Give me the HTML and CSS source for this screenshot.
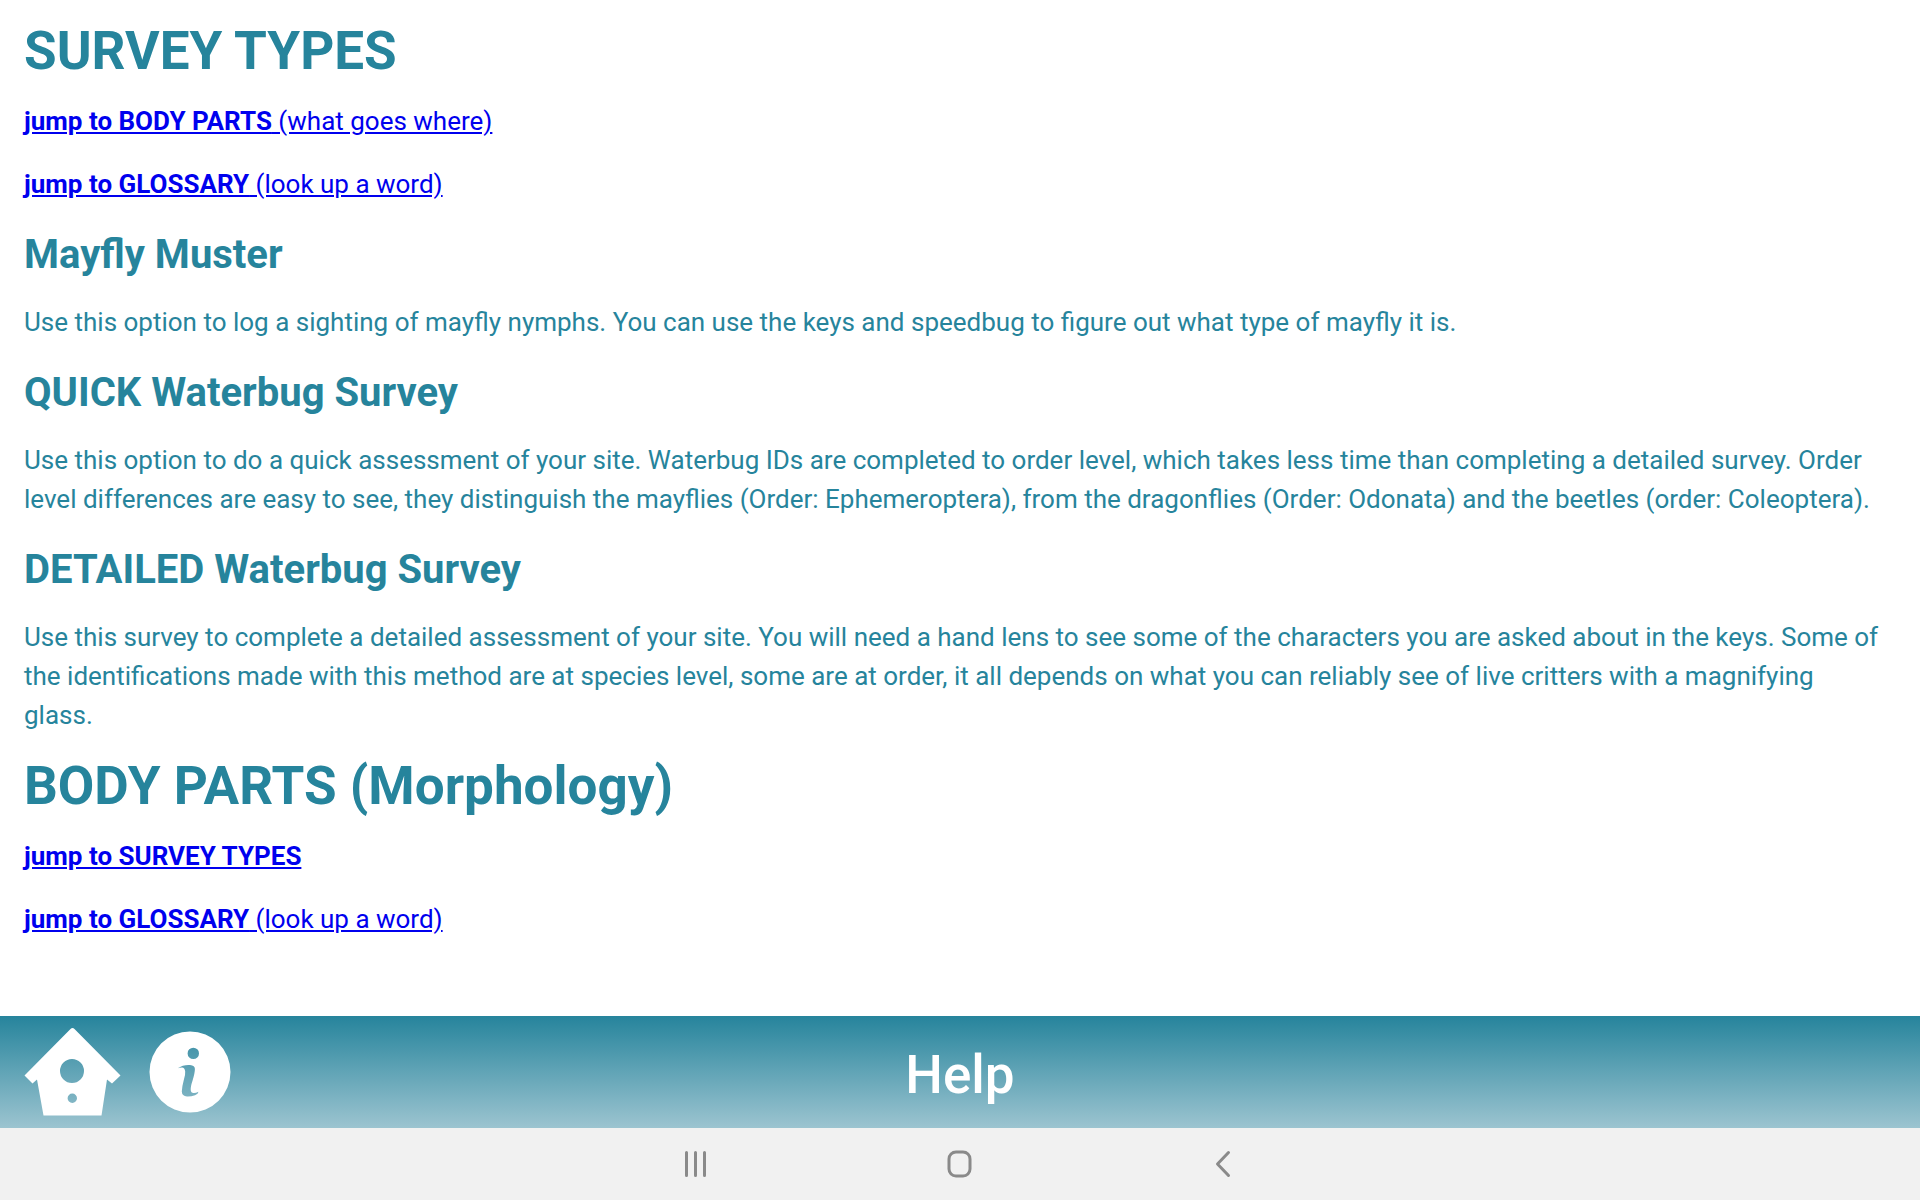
FILE: index.html
```html
<!DOCTYPE html>
<html lang="en">
<head>
<meta charset="utf-8">
<title>Help</title>
<link rel="stylesheet" href="styles.css">
</head>
<body>
<main class="content">
<h1 id="survey">SURVEY TYPES</h1>
<p><a href="#body-parts"><b>jump to BODY PARTS</b> (what goes where)</a></p>
<p><a href="#glossary"><b>jump to GLOSSARY</b> (look up a word)</a></p>
<h2>Mayfly Muster</h2>
<p>Use this option to log a sighting of mayfly nymphs. You can use the keys and speedbug to figure out what type of mayfly it is.</p>
<h2>QUICK Waterbug Survey</h2>
<p>Use this option to do a quick assessment of your site. Waterbug IDs are completed to order level, which takes less time than completing a detailed survey. Order level differences are easy to see, they distinguish the mayflies (Order: Ephemeroptera), from the dragonflies (Order: Odonata) and the beetles (order: Coleoptera).</p>
<h2>DETAILED Waterbug Survey</h2>
<p>Use this survey to complete a detailed assessment of your site. You will need a hand lens to see some of the characters you are asked about in the keys. Some of the identifications made with this method are at species level, some are at order, it all depends on what you can reliably see of live critters with a magnifying glass.</p>
<h1 id="body-parts">BODY PARTS (Morphology)</h1>
<p><a href="#survey"><b>jump to SURVEY TYPES</b></a></p>
<p><a href="#glossary"><b>jump to GLOSSARY</b> (look up a word)</a></p>
</main>
<footer class="toolbar">
<div class="actions">
<button class="icon-button" type="button" aria-label="Home"><svg width="97" height="88" viewBox="0 0 97 88"><path fill="#fff" fill-rule="evenodd" d="M46.500 1Q48.500-1 50.500 1L96.500 47.500 88 55.500 83 51.500 77.500 87.500h-58L13 51.500 8.500 55.500.5 47.500zM48 31a12 12 0 1 0 0 24 12 12 0 0 0 0-24zm.3 34.600a4.700 4.700 0 1 0 0 9.400 4.700 4.700 0 0 0 0-9.400z"/></svg></button>
<button class="icon-button" type="button" aria-label="Information"><svg width="82" height="82" viewBox="0 0 82 82"><path fill="#fff" fill-rule="evenodd" d="M41 .5a40.500 40.500 0 1 0 0 81 40.500 40.500 0 0 0 0-81zM44.300 16.700a5.700 5.700 0 1 1 0 11.400 5.700 5.700 0 0 1 0-11.400zM28.800 37.300C32 34.500 38 33.500 41 34q5 .5 4.900 4 0 4-2.400 11.700-2 6-1.800 9.300.2 3 2.800 3 2 .2 5-1.200-.3 2-3.500 3.500-4 1.500-8 1.300-5-.5-5.200-5 .2-5 2-11.600 1.700-5 1.400-8.500-.5-4-3.200-4-2 0-4.200.8z"/></svg></button>
</div>
<div class="title">Help</div>
</footer>
<nav class="system-bar" aria-label="System">
<button class="nav-button" type="button" aria-label="Recent apps"><svg width="28" height="28" viewBox="0 0 28 28"><path d="M4.500 2.500v23M13.500 2.500v23M22.500 2.500v23"/></svg></button>
<button class="nav-button" type="button" aria-label="Home screen"><svg width="28" height="28" viewBox="0 0 28 28"><rect x="3" y="2" width="21" height="24" rx="7"/></svg></button>
<button class="nav-button" type="button" aria-label="Back"><svg width="28" height="28" viewBox="0 0 28 28"><path d="M18.500 2.500 7.500 14l11 11.500"/></svg></button>
</nav>
</body>
</html>
```
FILE: styles.css
```css
* { box-sizing: border-box; }
body { margin: 0; min-height: 100vh; display: flex; flex-direction: column; font-family: Roboto, sans-serif; color: #26849c; background: #fff; }
.content { flex: 1; padding: 24px 40px 0 24px; font-size: 26px; line-height: 39px; }
h1 { margin: 0 0 23px; font-size: 53px; line-height: 55px; }
h2 { margin: 0 0 21px; font-size: 40px; line-height: 54px; }
p { margin: 0 0 24px; }
a { color: #0000ee; }
.toolbar { height: 112px; display: grid; grid-template-columns: 1fr auto 1fr; align-items: center; padding: 0 24px; background: linear-gradient(#26849c, #9cc4d0); }
.actions { display: flex; gap: 28px; align-items: center; }
.icon-button { padding: 0; border: 0; background: none; }
.icon-button svg { display: block; }
.title { padding-top: 6px; color: #fff; font-size: 53px; font-weight: 500; line-height: 64px; }
.system-bar { height: 72px; display: flex; justify-content: center; background: #f1f1f1; }
.nav-button { width: 264px; padding: 0; border: 0; background: none; display: grid; place-items: center; }
.nav-button svg { fill: none; stroke: #8a8a8a; stroke-width: 3; stroke-linecap: round; stroke-linejoin: round; }
```
